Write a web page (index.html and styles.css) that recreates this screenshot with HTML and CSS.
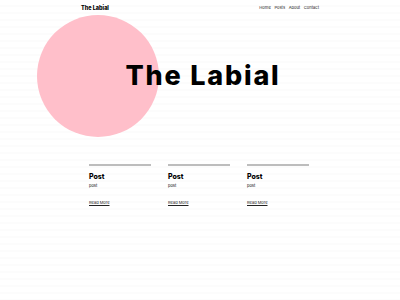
FILE: index.html
```html
<!DOCTYPE html>
<html>
<head>
<meta charset="utf-8">
<link rel="stylesheet" href="styles.css">
</head>
<body>
<header class="site-header">
  <div class="brand">The Labial</div>
  <nav class="nav">
    <a href="#">Home</a>
    <a href="#">Posts</a>
    <a href="#">About</a>
    <a href="#">Contact</a>
  </nav>
</header>
<section class="hero">
  <div class="circle"></div>
  <h1 class="hero-title">The Labial</h1>
</section>
<section class="posts">
  <article class="post">
    <div class="post-bar"></div>
    <h2 class="post-title">Post</h2>
    <p class="post-body">post</p>
    <a class="post-link" href="#">Read More</a>
  </article>
  <article class="post">
    <div class="post-bar"></div>
    <h2 class="post-title">Post</h2>
    <p class="post-body">post</p>
    <a class="post-link" href="#">Read More</a>
  </article>
  <article class="post">
    <div class="post-bar"></div>
    <h2 class="post-title">Post</h2>
    <p class="post-body">post</p>
    <a class="post-link" href="#">Read More</a>
  </article>
</section>
</body>
</html>
```
FILE: styles.css
```css
html, body {
  margin: 0;
  padding: 0;
  background: #ffffff;
  font-family: Inter, "Liberation Sans", sans-serif;
  color: #000;
}
body {
  width: 400px;
  height: 300px;
  overflow: hidden;
  background-image: repeating-linear-gradient(to bottom, #ffffff 0, #ffffff 5px, #fcfcfc 5px, #fcfcfc 7px);
}
.site-header {
  width: 238px;
  margin: 0 auto;
  padding-top: 3px;
  height: 9px;
  display: flex;
  justify-content: space-between;
  align-items: center;
}
.brand {
  font-size: 5.5px;
  font-weight: 800;
}
.nav {
  display: flex;
  gap: 3.6px;
}
.nav a {
  font-size: 4.1px;
  color: #222;
  text-decoration: none;
}
.hero {
  position: relative;
  height: 139px;
  display: flex;
  align-items: center;
  justify-content: center;
}
.circle {
  position: absolute;
  left: 37px;
  top: 3px;
  width: 122px;
  height: 122px;
  border-radius: 50%;
  background: #ffbfca;
}
.hero-title {
  position: relative;
  margin: 0 0 13px 6px;
  font-size: 27px;
  font-weight: 800;
  letter-spacing: 1.8px;
}
.posts {
  width: 222px;
  margin: 13px auto 0;
  display: grid;
  grid-template-columns: repeat(3, 62px);
  column-gap: 17px;
}
.post-bar {
  height: 2px;
  background: #bdbdbd;
}
.post-title {
  margin: 6px 0 0;
  font-size: 7px;
  font-weight: 800;
}
.post-body {
  margin: 2px 0 0;
  font-size: 4px;
}
.post-link {
  display: inline-block;
  margin-top: 5px;
  font-size: 4px;
  color: #222;
  text-decoration: underline;
}
```
